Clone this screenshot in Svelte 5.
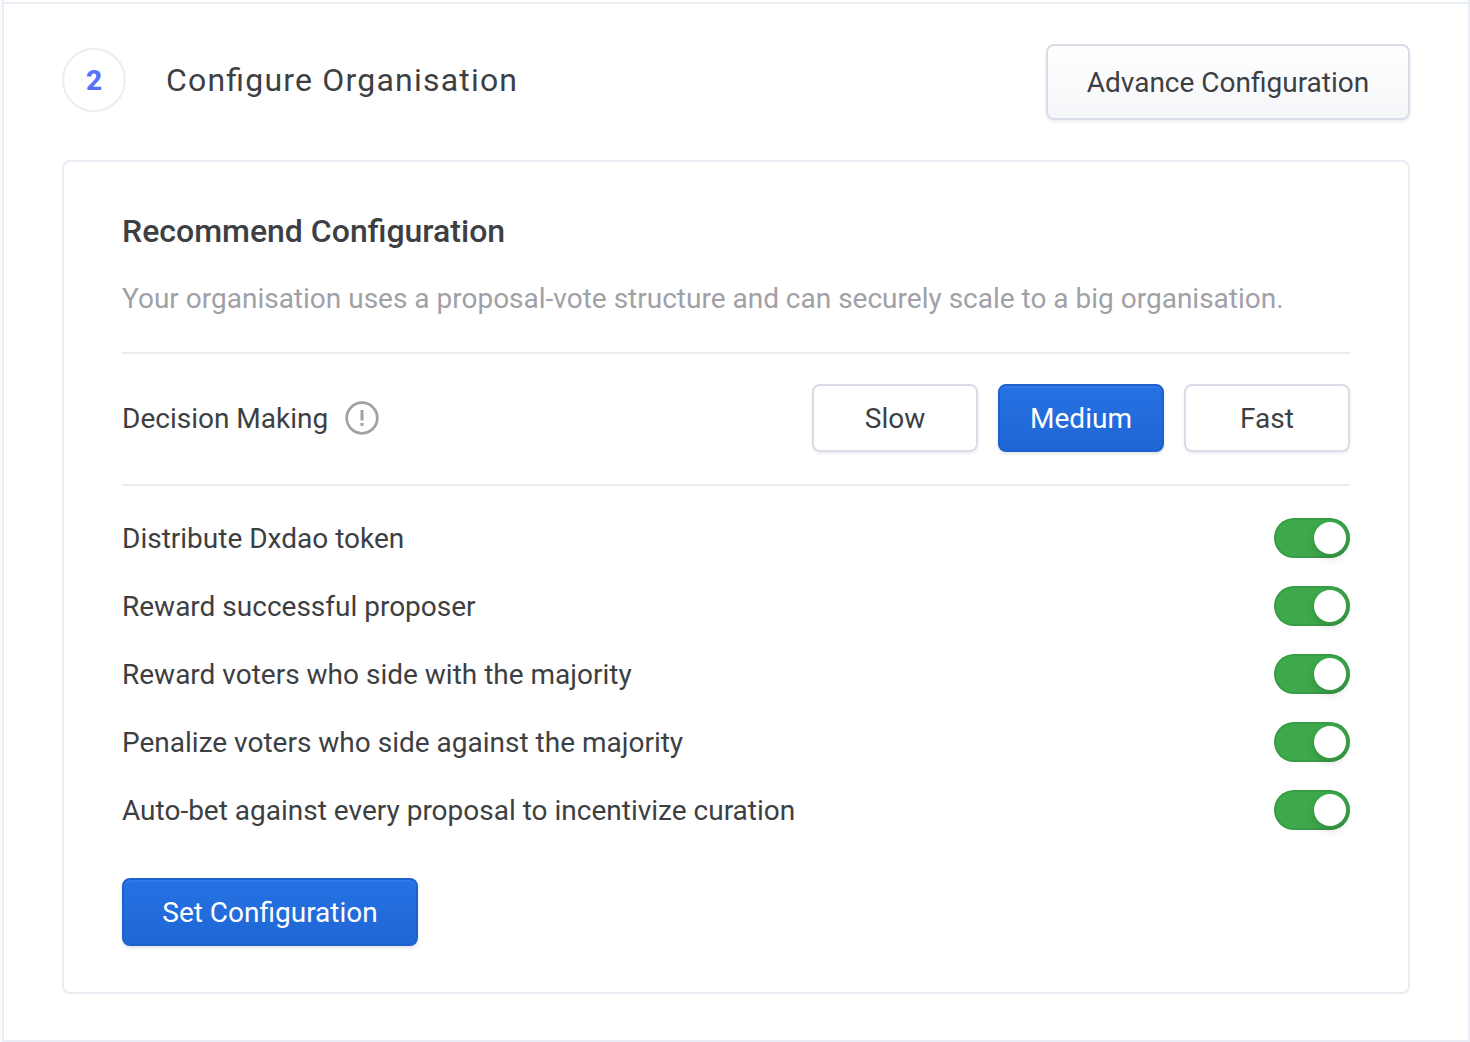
<script>
  const speeds = ['Slow', 'Medium', 'Fast'];
  let speed = $state('Medium');
  let options = $state([
    { label: 'Distribute Dxdao token', on: true },
    { label: 'Reward successful proposer', on: true },
    { label: 'Reward voters who side with the majority', on: true },
    { label: 'Penalize voters who side against the majority', on: true },
    { label: 'Auto-bet against every proposal to incentivize curation', on: true }
  ]);
</script>

<main class="page">
  <section class="step">
    <header class="step-header">
      <span class="number">2</span>
      <h1>Configure Organisation</h1>
      <button class="btn advance">Advance Configuration</button>
    </header>

    <div class="card">
      <h2>Recommend Configuration</h2>
      <p class="description">
        Your organisation uses a proposal-vote structure and can securely scale to a big organisation.
      </p>

      <div class="decision">
        <span class="label">Decision Making</span>
        <svg class="info" width="34" height="34" viewBox="0 0 34 34" aria-hidden="true">
          <circle cx="17" cy="17" r="15.3" fill="none" stroke="currentColor" stroke-width="2.7" />
          <path d="M15.5 9h3v10.6h-3zM15.5 22h3v3h-3z" fill="currentColor" />
        </svg>
        <div class="speeds">
          {#each speeds as s}
            <button class="btn speed" class:primary={speed === s} onclick={() => (speed = s)}>{s}</button>
          {/each}
        </div>
      </div>

      <ul class="options">
        {#each options as option}
          <li>
            <span class="label">{option.label}</span>
            <button
              class="toggle"
              class:on={option.on}
              role="switch"
              aria-checked={option.on}
              aria-label={option.label}
              onclick={() => (option.on = !option.on)}
            ><span class="knob"></span></button>
          </li>
        {/each}
      </ul>

      <button class="btn primary submit">Set Configuration</button>
    </div>
  </section>
</main>

<style>
  :global(body) {
    margin: 0;
    background: #fff;
  }
  .page {
    box-sizing: border-box;
    height: 1042px;
    padding-left: 2px;
    font-family: Roboto, sans-serif;
    color: #3d3f43;
    background: #fafbfd;
  }
  .step {
    box-sizing: border-box;
    height: 1042px;
    padding: 42px 58px 46px;
    border: 2px solid #e9edf4;
    border-top: 0;
    background: linear-gradient(#fff 2px, #e9edf4 2px, #e9edf4 4px, #fff 4px);
  }
  .step-header {
    display: flex;
    align-items: flex-start;
    height: 116px;
    padding-top: 2px;
  }
  .number {
    box-sizing: border-box;
    width: 64px;
    height: 64px;
    margin-top: 4px;
    border: 2px solid #ededee;
    border-radius: 50%;
    font-size: 28px;
    font-weight: 800;
    line-height: 62px;
    text-align: center;
    color: #5571fb;
  }
  h1 {
    margin: 4px auto 0 40px;
    font-size: 32px;
    font-weight: 400;
    line-height: 64px;
    letter-spacing: 1.2px;
    font-feature-settings: 'liga' 1;
  }
  .btn {
    box-sizing: border-box;
    padding: 0;
    border: 2px solid #d8dce9;
    border-radius: 8px;
    background: #fff;
    box-shadow: 0 2px 3px rgba(20, 30, 60, 0.07);
    font: 400 28px/66px Roboto, sans-serif;
    color: #3d3f43;
    text-align: center;
  }
  .advance {
    width: 364px;
    height: 76px;
    line-height: 74px;
    background: linear-gradient(#fff, #f5f6f9);
  }
  .primary {
    border-color: #1d62cc;
    background: linear-gradient(#2672e4, #1f66d4);
    box-shadow: inset 0 2px 0 rgba(255, 255, 255, 0.05), 0 2px 3px rgba(20, 30, 60, 0.12);
    color: #fff;
  }
  .card {
    box-sizing: border-box;
    height: 834px;
    padding: 46px 58px;
    border: 2px solid #e9edf4;
    border-radius: 8px;
  }
  h2 {
    margin: 0;
    font-size: 32px;
    font-weight: 500;
    line-height: 46px;
  }
  .description {
    margin: 25px 0 33px;
    font-size: 28px;
    line-height: 40px;
    white-space: nowrap;
    color: #a0a1a7;
  }
  .label {
    font-size: 28px;
    white-space: nowrap;
  }
  .decision {
    display: flex;
    align-items: center;
    height: 128px;
    padding-bottom: 2px;
    border-top: 2px solid #e9edf2;
    border-bottom: 2px solid #e9edf2;
  }
  .info {
    margin-left: 17px;
    color: #a0a1a7;
  }
  .speeds {
    display: flex;
    gap: 20px;
    margin-left: auto;
  }
  .speed {
    width: 166px;
    height: 68px;
  }
  .options {
    display: flex;
    flex-direction: column;
    gap: 28px;
    margin: 32px 0 48px;
    padding: 0;
    list-style: none;
  }
  .options li {
    display: flex;
    align-items: center;
    justify-content: space-between;
    height: 40px;
  }
  .toggle {
    display: flex;
    align-items: center;
    width: 76px;
    height: 40px;
    padding: 0 4px;
    border: 0;
    border-radius: 20px;
    background: #b9bdc6;
    box-shadow: inset 0 0 0 2px rgba(0, 0, 0, 0.08);
  }
  .toggle.on {
    justify-content: flex-end;
    background: #3da94b;
  }
  .knob {
    width: 32px;
    height: 32px;
    border-radius: 50%;
    background: #fff;
    box-shadow: 0 4px 8px rgba(0, 0, 0, 0.17);
  }
  .submit {
    display: block;
    width: 296px;
    height: 68px;
  }
</style>
